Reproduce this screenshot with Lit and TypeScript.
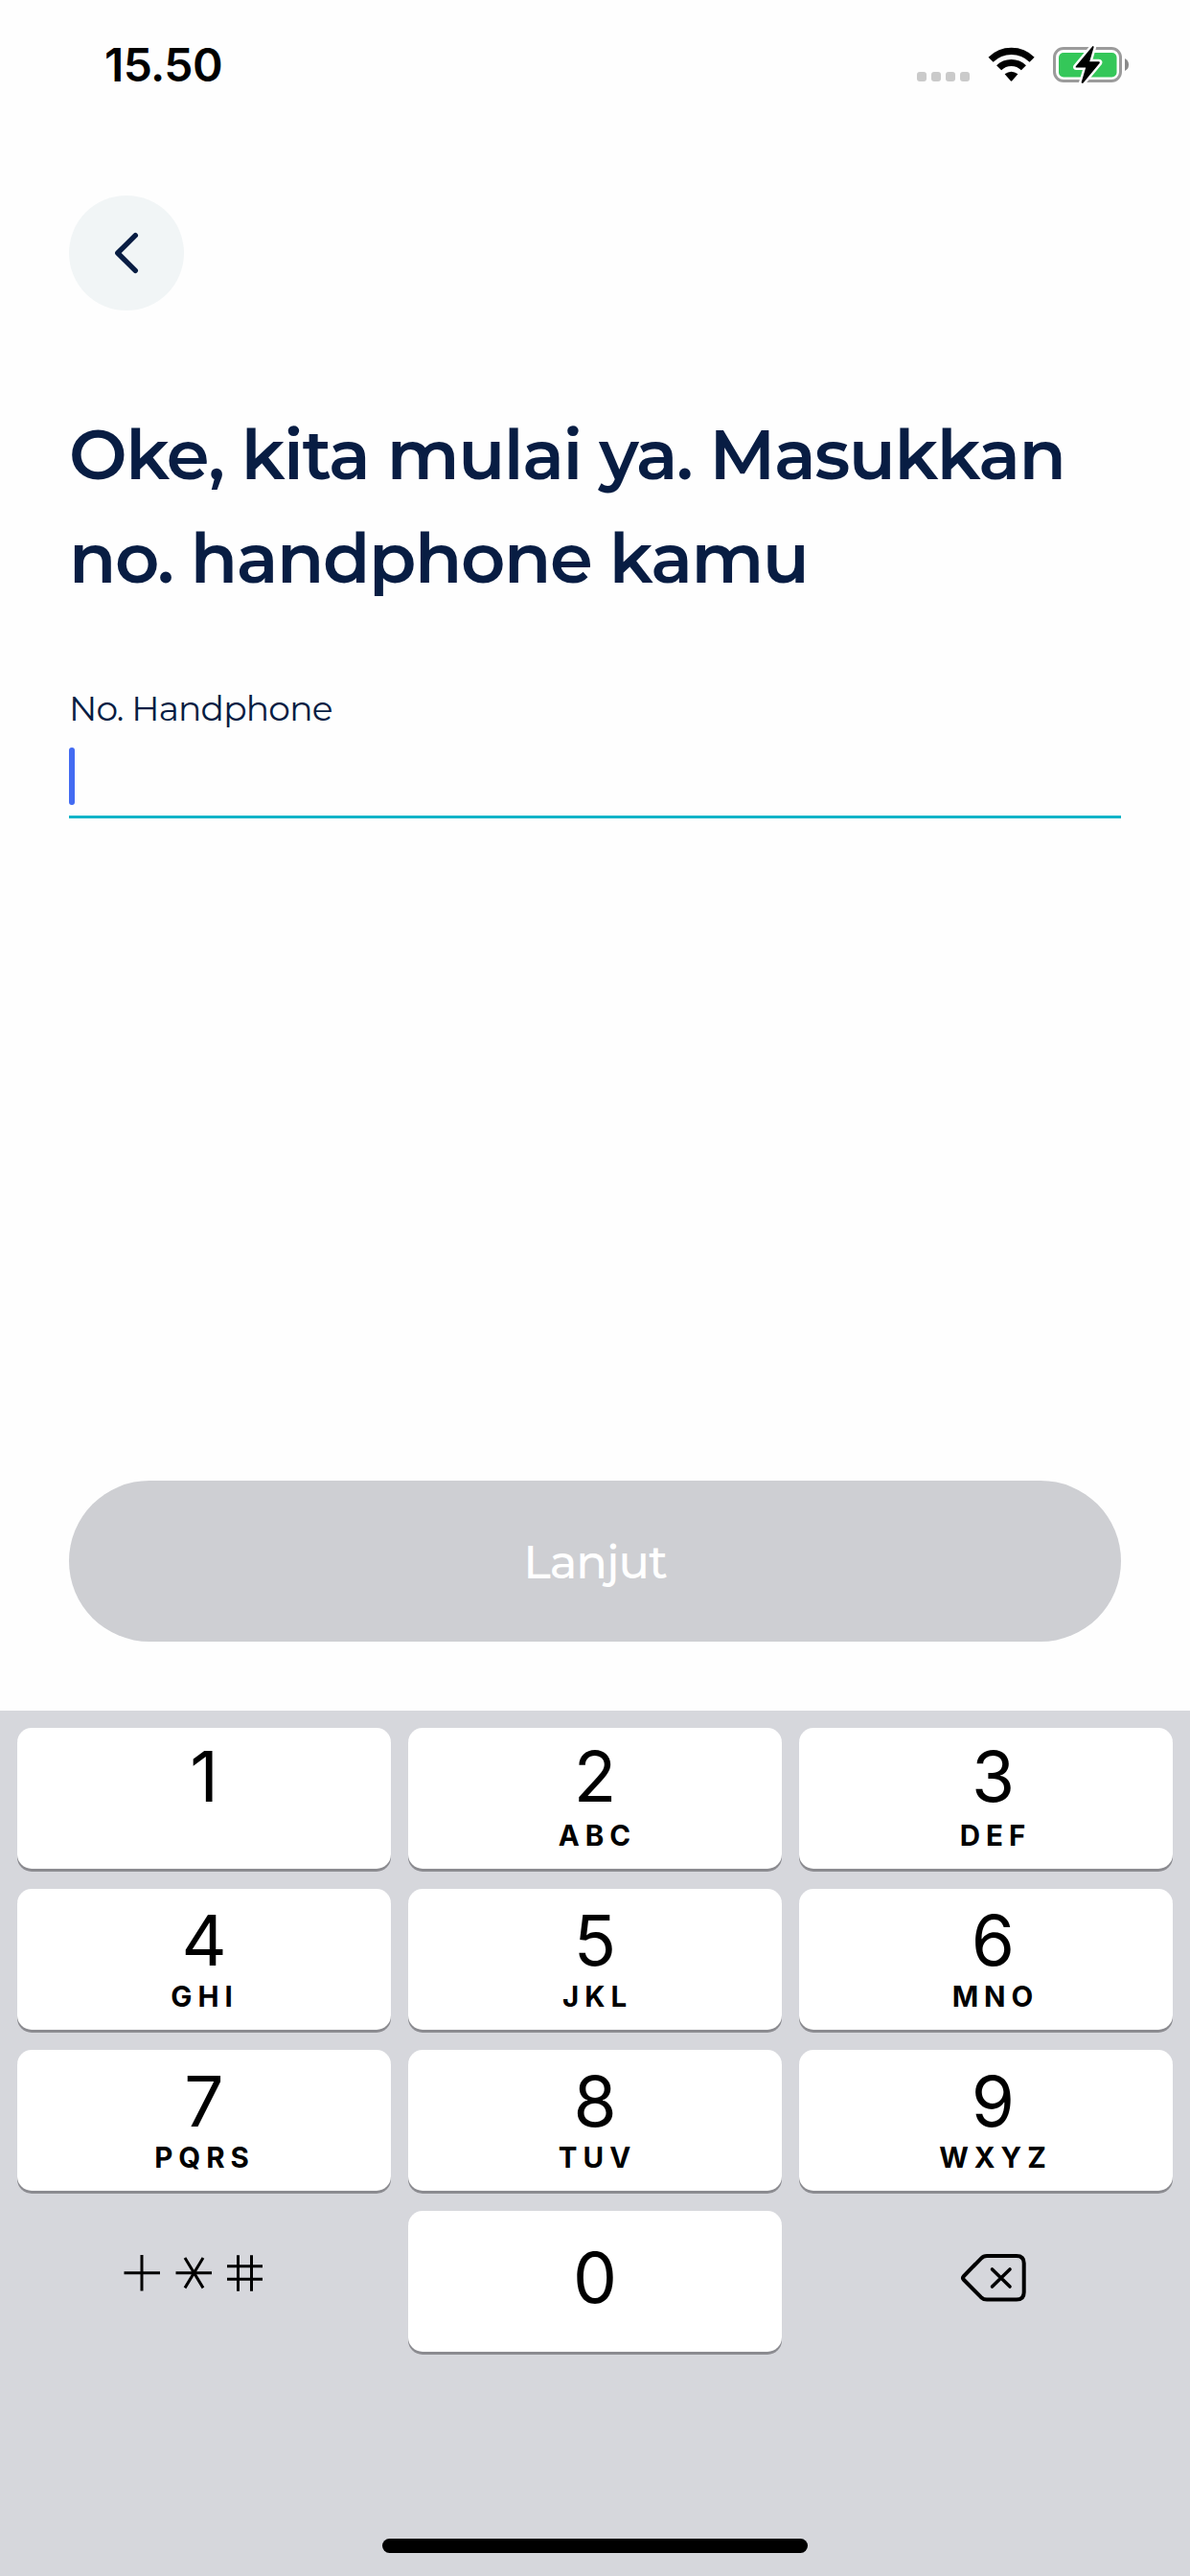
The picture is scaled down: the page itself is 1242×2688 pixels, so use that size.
import { LitElement, html, css, svg, nothing } from "lit";
import { customElement, property } from "lit/decorators.js";

interface KeyDef {
  digit: string;
  letters?: string;
}

const ROWS: KeyDef[][] = [
  [{ digit: "1" }, { digit: "2", letters: "ABC" }, { digit: "3", letters: "DEF" }],
  [{ digit: "4", letters: "GHI" }, { digit: "5", letters: "JKL" }, { digit: "6", letters: "MNO" }],
  [{ digit: "7", letters: "PQRS" }, { digit: "8", letters: "TUV" }, { digit: "9", letters: "WXYZ" }],
];

@customElement("status-bar")
export class StatusBar extends LitElement {
  static styles = css`
    :host { display: block; height: 204px; box-sizing: border-box; padding: 39px 61px 0 109px; }
    .bar { display: flex; justify-content: space-between; height: 60px; }
    .time { font: 600 48px/58px Inter, "Liberation Sans", sans-serif; letter-spacing: -0.6px; color: #000; }
    .icons { display: block; width: 226px; height: 44px; margin-top: 6px; }
  `;
  render() {
    return html`<div class="bar">
      <div class="time">15.50</div>
      <svg class="icons" viewBox="955 45 226 44">
        ${[957, 972, 987, 1002].map(
          (x) => svg`<rect x=${x} y="75" width="10" height="10" rx="3" fill="#cacaca"/>`
        )}
        <g fill="none" stroke="#000" stroke-width="7.2">
          <path d="M1034.1 62.3 A30.5 30.5 0 0 1 1077.1 62.3"/>
          <path d="M1042.6 70.8 A18.3 18.3 0 0 1 1068.4 70.8"/>
        </g>
        <path d="M1048.6 77.3 Q1055.5 72.2 1062.4 77.3 L1056.5 84.1 Q1055.5 85.2 1054.5 84.1Z" fill="#000"/>
        <rect x="1100.5" y="50.5" width="69" height="34" rx="9.5" fill="#fff" stroke="#9b9b9b" stroke-width="3"/>
        <path d="M1174 61 Q1178 63 1178 67.5 Q1178 72 1174 74Z" fill="#8a8a8a"/>
        <rect x="1105" y="55" width="60.5" height="25.5" rx="5" fill="#34c759"/>
        <path d="M1140.3 48.3 L1122.8 69.3 Q1122 70.6 1123.5 70.6 L1133.2 70.6 L1128.6 86 Q1129.4 87.4 1130.6 86.5 L1147.6 66 Q1148.6 64.2 1146.8 64.2 L1137.2 64.2 L1141.6 49.2 Q1141.3 47.6 1140.3 48.3Z" fill="#000" stroke="#fff" stroke-width="5" paint-order="stroke" stroke-linejoin="round"/>
      </svg>
    </div>`;
  }
}

@customElement("number-key")
export class NumberKey extends LitElement {
  @property() digit = "";
  @property() letters = "";
  static styles = css`
    :host { display: block; }
    .key {
      box-sizing: border-box; height: 147px; border-radius: 15px; background: #fff;
      box-shadow: 0 3px 0 #8b8b90; color: #000; text-align: center;
      padding: var(--digit-top, 17px) 0 0 var(--nudge, 0px);
      font-family: Inter, "Liberation Sans", sans-serif;
    }
    .digit { font-size: 73px; line-height: 74px; font-weight: 400; }
    .letters {
      margin-top: calc(22.5px - var(--digit-top, 17px)); font-size: 29.5px; line-height: 30px;
      font-weight: 700; letter-spacing: 6px; padding-left: var(--letters-indent, 5px);
    }
  `;
  render() {
    return html`<div class="key">
      <div class="digit">${this.digit}</div>
      ${this.letters ? html`<div class="letters">${this.letters}</div>` : nothing}
    </div>`;
  }
}

@customElement("number-pad")
export class NumberPad extends LitElement {
  static styles = css`
    :host { display: block; height: 903px; box-sizing: border-box; background: #d6d7dc; padding: 18px 18px 24px; }
    .pad { display: flex; flex-direction: column; height: 100%; }
    .grid { display: grid; grid-template-columns: repeat(3, 390px); grid-auto-rows: 147px; gap: 21px 18px; }
    .first { --digit-top: 14px; }
    .left { --letters-indent: 1px; }
    .right { --nudge: 15px; }
    .zero { --digit-top: 33px; }
    .cell { display: block; width: 390px; height: 147px; }
    .home { margin: auto auto 0; width: 444px; height: 15px; border-radius: 8px; background: #000; }
  `;
  render() {
    return html`<div class="pad">
      <div class="grid">
        ${ROWS.map((row, r) =>
          row.map(
            (k, c) => html`<number-key
              class="${r === 0 ? "first" : ""} ${["left", "", "right"][c]}"
              digit=${k.digit}
              letters=${k.letters ?? ""}
            ></number-key>`
          )
        )}
        <svg class="cell" viewBox="18 2307 390 147" fill="none" stroke="#000" stroke-width="3">
          <path d="M129.5 2371.7H167M148 2353V2390.5"/>
          <path d="M183.5 2371.7H221M193 2356L212 2387.4M212 2356L193 2387.4"/>
          <path d="M237 2364.7H274M237 2378.3H274M248.5 2353.3V2390.7M262.5 2353.3V2390.7"/>
        </svg>
        <number-key class="zero" digit="0"></number-key>
        <svg class="cell" viewBox="834 2307 390 147" fill="none" stroke="#000" stroke-width="4" stroke-linecap="round" stroke-linejoin="round">
          <path d="M1030 2354H1061Q1068.7 2354 1068.7 2361.5V2392Q1068.7 2399.6 1061 2399.6H1030Q1026.5 2399.6 1024 2397.2L1006 2379Q1004 2377 1006 2375L1024 2356.6Q1026.5 2354 1030 2354Z"/>
          <path d="M1035.5 2368L1054 2386M1054 2368L1035.5 2386" stroke-width="3.6"/>
        </svg>
      </div>
      <div class="home"></div>
    </div>`;
  }
}

@customElement("app-root")
export class AppRoot extends LitElement {
  static styles = css`
    :host {
      display: flex; flex-direction: column; width: 1242px; height: 2688px; overflow: hidden;
      background: #fefefe; color: #081d43; font-family: Montserrat, Inter, "Liberation Sans", sans-serif;
    }
    .content { flex: 1; display: flex; flex-direction: column; padding: 0 72px 72px; }
    .back { width: 120px; height: 120px; border-radius: 50%; background: #f1f5f6; border: 0; padding: 0; display: block; }
    .back svg { display: block; width: 120px; height: 120px; }
    .title { margin: 96px 0 0; font-size: 72px; line-height: 108px; font-weight: 600; letter-spacing: -1.44px; white-space: nowrap; }
    .line { display: block; }
    .label { margin-top: 79px; font-size: 36px; line-height: 48px; font-weight: 400; letter-spacing: -0.8px; }
    .field { display: flex; align-items: flex-start; height: 71px; margin-top: 17px; border-bottom: 3px solid #12b4c8; }
    .caret { width: 6px; height: 60px; border-radius: 3px; background: #436bf2; }
    .next {
      margin-top: auto; height: 168px; border: 0; border-radius: 84px; background: #cecfd3; color: #fff; padding: 2px 0 0;
      font-family: inherit; font-size: 48px; font-weight: 500; letter-spacing: -1.1px;
    }
  `;
  render() {
    return html`
      <status-bar></status-bar>
      <main class="content">
        <button class="back" aria-label="Kembali">
          <svg viewBox="72 204 120 120" fill="none" stroke="#081d43" stroke-width="5.4" stroke-linecap="round" stroke-linejoin="round">
            <path d="M141.3 245.7L122.8 264L141.3 282.3"/>
          </svg>
        </button>
        <h1 class="title">
          <span class="line">Oke, kita mulai ya. Masukkan</span>
          <span class="line">no. handphone kamu</span>
        </h1>
        <div class="label">No. Handphone</div>
        <div class="field"><span class="caret"></span></div>
        <button class="next">Lanjut</button>
      </main>
      <number-pad></number-pad>
    `;
  }
}
